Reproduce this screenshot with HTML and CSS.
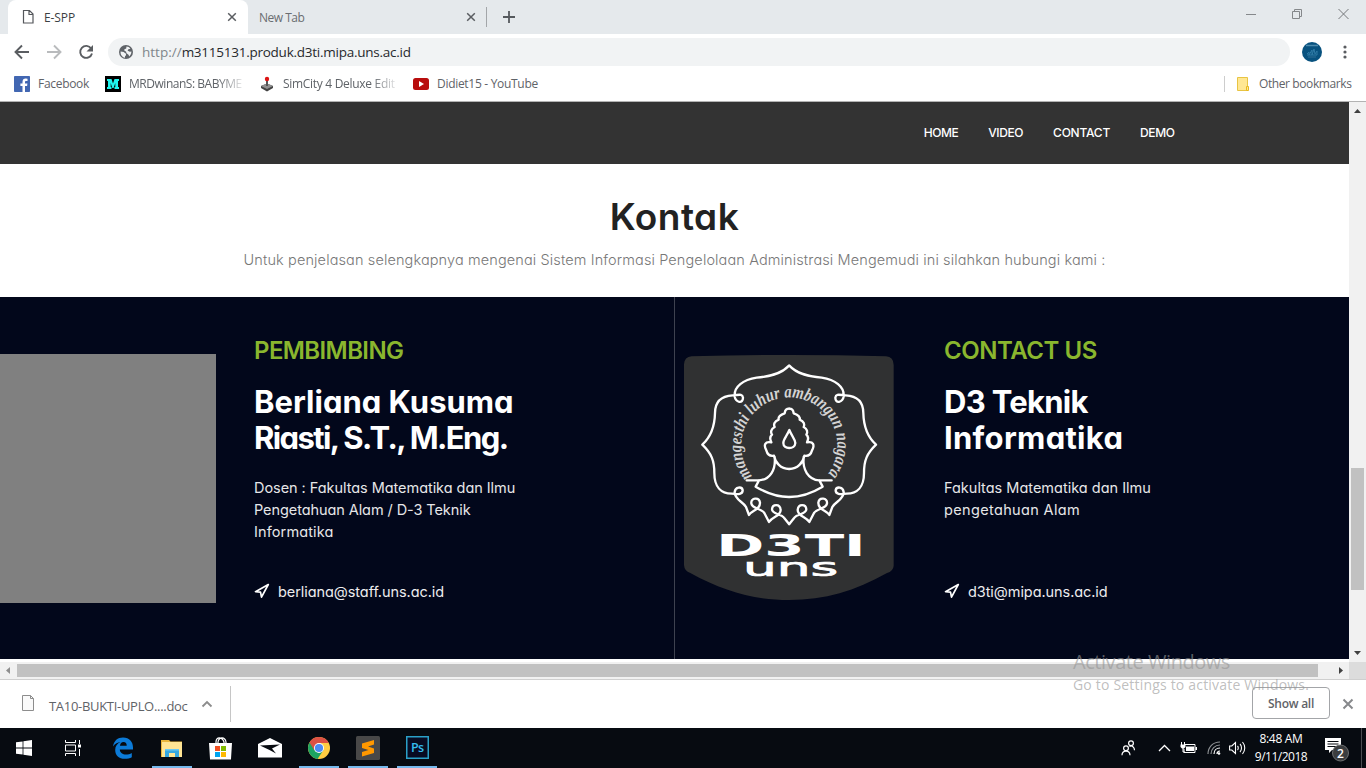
FILE: index.html
```html
<!DOCTYPE html>
<html lang="id">
<head>
<meta charset="utf-8">
<title>E-SPP</title>
<link rel="stylesheet" href="styles.css">
</head>
<body>
<div class="screen">
  <header class="tabs">
    <div class="tab tab-active">
      <svg class="tab-icon" width="12" height="16" viewBox="0 0 12 16"><path d="M1.5 1.5h6l3.500 3.500v9h-9.500z M7 1.500v4h4" fill="none" stroke="#54575b" stroke-width="1.200"/></svg>
      <span class="tab-title t-espp">E-SPP</span>
      <svg class="tab-close" width="10" height="10" viewBox="0 0 10 10"><path d="M1.200 1.200l7.600 7.600M8.800 1.200l-7.600 7.600" stroke="#5a5d61" stroke-width="1.500"/></svg>
    </div>
    <div class="tab tab-idle">
      <span class="tab-title t-newtab">New Tab</span>
      <svg class="tab-close" width="10" height="10" viewBox="0 0 10 10"><path d="M1.200 1.200l7.600 7.600M8.800 1.200l-7.600 7.600" stroke="#5a5d61" stroke-width="1.500"/></svg>
    </div>
    <svg class="tab-plus" width="12" height="12" viewBox="0 0 12 12"><path d="M6 0v12M0 6h12" stroke="#55595d" stroke-width="1.800"/></svg>
    <div class="window-controls">
      <svg width="11" height="12" viewBox="0 0 11 12"><path d="M0 6.500h10" stroke="#85888b"/></svg>
      <svg width="11" height="12" viewBox="0 0 11 12"><path d="M.5 3.500h7v7h-7zM2.500 3.500v-2h7v7h-2" fill="none" stroke="#85888b"/></svg>
      <svg width="11" height="12" viewBox="0 0 11 12"><path d="M.5 1l10 10M10.500 1l-10 10" stroke="#75787b"/></svg>
    </div>
  </header>
  <div class="toolbar">
    <svg class="tool-icon" width="16" height="16" viewBox="0 0 16 16"><path d="M15 8H2M8 1.500L1.500 8 8 14.500" fill="none" stroke="#5a5d61" stroke-width="1.900"/></svg>
    <svg class="tool-icon" width="16" height="16" viewBox="0 0 16 16"><path d="M1 8h13M8 1.500L14.500 8 8 14.500" fill="none" stroke="#b9bbbd" stroke-width="1.900"/></svg>
    <svg class="tool-icon" width="16" height="16" viewBox="0 0 16 16"><path d="M13.200 4.500A6 6 0 1 0 14 9.500" fill="none" stroke="#5a5d61" stroke-width="1.900"/><path d="M15 1v6.500H8.500z" fill="#5a5d61"/></svg>
    <div class="omnibox">
      <svg width="14" height="14" viewBox="0 0 14 14"><circle cx="7" cy="7" r="7" fill="#5f6368"/><path d="M1.600 6.500l3 .5 2.400 1.800v1.400l-1 1v1.500C3 12.300 1.300 9.500 1.600 6.500zM7.500 1.600c1.500 0 3 .9 3.900 2.100l-2 .5-.8 1.600 2.300 1 1.500-.2c0 2-.8 3.700-2.100 4.800l-.8-1.700-2-1.500-.5-1.700-1.500-.7-.3-1.400 2-1z" fill="#f1f3f4"/></svg>
      <span class="url"><span class="scheme">http://</span><span class="host">m3115131.produk.d3ti.mipa.uns.ac.id</span></span>
    </div>
    <svg class="avatar" width="20" height="20" viewBox="0 0 20 20"><circle cx="10" cy="10" r="10" fill="#08527f"/><path d="M4 3.500h12" stroke="#4d8bad" stroke-width="1.500"/><path d="M5 12l2-2v3l3-5v5l2-6 1 5 2-3v4H5" fill="none" stroke="#2f7aa5" stroke-width="1"/><path d="M6 15h8" stroke="#2f6f96"/></svg>
    <svg class="kebab" width="4" height="14" viewBox="0 0 4 14"><g fill="#5a5d61"><circle cx="2" cy="2" r="1.600"/><circle cx="2" cy="7" r="1.600"/><circle cx="2" cy="12" r="1.600"/></g></svg>
  </div>
  <div class="bookmarks">
    <div class="bm bm-fb"><svg width="16" height="16" viewBox="0 0 16 16"><rect width="16" height="16" rx=".8" fill="#4267b2"/><path d="M11 16V10h2.100l.3-2.400H11V6.200c0-.8.300-1.200 1.200-1.200h1.300V2.700l-1.800-.1C9.700 2.600 8.500 3.800 8.500 5.900v1.700H6.400V10h2.100v6z" fill="#fff"/></svg><span class="t-fb">Facebook</span></div>
    <div class="bm bm-mr"><svg width="16" height="16" viewBox="0 0 16 16"><path fill="#000" d="M0 0h16v16H0z"/><path d="M2 3h4.500L8 7.500 9.500 3H14v2h-1v6h1v2H9.500v-2h.8V7L8.600 12H7.300L5.700 7v4h.8v2H2v-2h1V5H2z" fill="#1ff5ee"/></svg><span class="t-mr fade">MRDwinanS: BABYME</span></div>
    <div class="bm bm-sim"><svg width="14" height="16" viewBox="0 0 14 16"><path d="M1 10l6-2.500L13 10v2l-6 3.500L1 12z" fill="#444"/><path d="M1 10l6-2.500L13 10l-6 3z" fill="#909090"/><path d="M7 4v6" stroke="#555" stroke-width="2"/><circle cx="7" cy="3" r="2.200" fill="#dc1414"/></svg><span class="t-sim fade">SimCity 4 Deluxe Edit</span></div>
    <div class="bm bm-yt"><svg width="16" height="12" viewBox="0 0 16 12"><rect width="16" height="12" rx="2.500" fill="#b80d0d"/><path d="M6 3l5 3-5 3z" fill="#fff"/></svg><span class="t-yt">Didiet15 - YouTube</span></div>
    <div class="bm bm-other"><svg width="12" height="14" viewBox="0 0 12 14"><path d="M.5.500h10v13H.5z" fill="#ffe793" stroke="#e8c443"/><path d="M9.500 9.500h2v4h-2z" fill="#ffe793" stroke="#e8b91f"/></svg><span class="t-other">Other bookmarks</span></div>
  </div>
  <div class="viewport">
    <main class="page">
      <nav class="nav"><a class="n-home">HOME</a><a class="n-video">VIDEO</a><a class="n-contact">CONTACT</a><a class="n-demo">DEMO</a></nav>
      <section class="intro">
        <h1>Kontak</h1>
        <p>Untuk penjelasan selengkapnya mengenai Sistem Informasi Pengelolaan Administrasi Mengemudi ini silahkan hubungi kami :</p>
      </section>
      <section class="contacts">
        <article class="card card-left">
          <div class="photo"></div>
          <div class="info">
            <h2 class="k-pem">PEMBIMBING</h2>
            <h3><span class="k-ber">Berliana Kusuma</span><br><span class="k-ria">Riasti, S.T., M.Eng.</span></h3>
            <p class="desc"><span class="k-dos">Dosen : Fakultas Matematika dan Ilmu</span><br><span class="k-pen">Pengetahuan Alam / D-3 Teknik</span><br><span class="k-inf">Informatika</span></p>
            <div class="mail"><svg width="16" height="16" viewBox="0 0 16 16"><path d="M14.300 1.500L1.500 8.700l5 .4 1 5z" fill="none" stroke="#fff" stroke-width="1.700" stroke-linejoin="round"/></svg><span class="k-m1">berliana@staff.uns.ac.id</span></div>
          </div>
        </article>
        <article class="card">
          <svg class="emblem" width="230" height="265" viewBox="0 0 690 795">
            <path d="M50 34Q345 26 633 34Q656 36 656 60V662Q655 678 636 684C540 738 450 765 342 765S145 738 46 684Q28 678 27 660V58Q28 36 50 34z" fill="#303132"/>
            <g fill="none" stroke="#fff" stroke-width="7" stroke-linejoin="round" stroke-linecap="round">
              <path id="half" d="M342 62C317 89 280 95 245 98C205 104 176 125 179 155C182 172 204 178 204 158C202 144 188 151 173 151C139 153 120 171 120 204C119 250 106 277 82 299C110 326 118 347 118 384C118 425 138 446 170 446C190 449 204 448 203 435C200 424 181 425 179 441C178 464 205 470 213 486L222 510C230 496 256 495 255 473C252 454 227 459 229 475C230 491 259 490 268 504L282 531C292 515 317 514 317 495C315 475 292 477 291 493C291 508 318 506 327 518L342 537"/>
              <use href="#half" transform="matrix(-1 0 0 1 685 0)"/>
              <path id="face" d="M342 191C330 191 330 199 329 205C314 210 309 216 311 224C298 229 295 239 299 246C288 252 286 262 291 269C283 276 285 284 289 292C270 288 265 300 274 316C278 331 287 334 297 332C301 353 317 372 342 372M299 336C303 373 286 404 252 406H215M252 406L242 425C277 446 307 456 342 456"/>
              <use href="#face" transform="matrix(-1 0 0 1 685 0)"/>
              <path d="M343 255C336 273 325 282 325 294C325 314 360 314 361 294C360 281 350 273 343 255z"/>
            </g>
            <path id="motto-arc" d="M232 393A144 144 0 1 1 454 393" fill="none"/>
            <text class="motto"><textPath href="#motto-arc" textLength="644" lengthAdjust="spacingAndGlyphs">mangesthi luhur ambangun nagara</textPath></text>
            <text class="logo-big" x="124" y="632" textLength="448" lengthAdjust="spacingAndGlyphs">D3TI</text>
            <text class="logo-small" x="204" y="694" textLength="286" lengthAdjust="spacingAndGlyphs">uns</text>
          </svg>
          <div class="info">
            <h2 class="k-con">CONTACT US</h2>
            <h3><span class="k-d3">D3 Teknik</span><br><span class="k-info">Informatika</span></h3>
            <p class="desc"><span class="k-fak">Fakultas Matematika dan Ilmu</span><br><span class="k-pal">pengetahuan Alam</span></p>
            <div class="mail"><svg width="16" height="16" viewBox="0 0 16 16"><path d="M14.300 1.500L1.500 8.700l5 .4 1 5z" fill="none" stroke="#fff" stroke-width="1.700" stroke-linejoin="round"/></svg><span class="k-m2">d3ti@mipa.uns.ac.id</span></div>
          </div>
        </article>
      </section>
    </main>
    <div class="vscroll">
      <svg width="17" height="17" viewBox="0 0 17 17"><path d="M5 11l3.500-4L12 11z" fill="#404040"/></svg>
      <div class="vthumb"></div>
      <svg width="17" height="17" viewBox="0 0 17 17"><path d="M5 6l3.500 4L12 6z" fill="#404040"/></svg>
    </div>
  </div>
  <div class="hscroll">
    <svg width="17" height="17" viewBox="0 0 17 17"><path d="M10 5L6 8.500 10 12z" fill="#8f8f8f"/></svg>
    <div class="hthumb"></div>
    <svg class="hright" width="17" height="17" viewBox="0 0 17 17"><path d="M7 5l4 3.500L7 12z" fill="#404040"/></svg>
    <div class="corner"></div>
  </div>
  <div class="downloads">
    <svg class="doc" width="12" height="16" viewBox="0 0 12 16"><path d="M.5.500h8l3 3v12H.5z" fill="#fafafa" stroke="#8d8d8d"/><path d="M8.500.500v3h3" fill="none" stroke="#8d8d8d"/></svg>
    <span class="t-doc">TA10-BUKTI-UPLO....doc</span>
    <svg class="chev" width="12" height="8" viewBox="0 0 12 8"><path d="M1.500 6.500L6 2l4.500 4.500" fill="none" stroke="#8c8c8c" stroke-width="1.800"/></svg>
    <div class="sep"></div>
    <div class="showall"><span class="t-show">Show all</span></div>
    <svg class="dl-close" width="12" height="12" viewBox="0 0 12 12"><path d="M1.500 1.500l9 9M10.500 1.500l-9 9" stroke="#87898c" stroke-width="2"/></svg>
  </div>
  <footer class="taskbar">
    <div class="app app-start"><svg width="16" height="16" viewBox="0 0 16 16"><path d="M0 2.300L6.600 1.400v6.200H0zM7.400 1.300L16 0v7.600H7.400zM0 8.400h6.600v6.200L0 13.700zM7.400 8.400H16V16l-8.600-1.300z" fill="#fff"/></svg></div>
    <div class="app app-view"><svg width="16" height="16" viewBox="0 0 16 16"><path d="M.5 0v2.500h10V0M.5 16v-2.500h10V16M.5 5h10v6H.5zM14.500 0v4M14.500 9v7" fill="none" stroke="#fff"/><path d="M13 4.500h3v3h-3z" fill="#fff"/></svg></div>
    <div class="app"><svg width="20" height="22" viewBox="0 0 20 22"><path d="M0 9.500C.8 3.800 4.700.5 10 .5c6.600 0 10 4.500 10 10v2H6.800c.2 3.500 3 5 6 5 2.400 0 4.200-.6 6-1.600v4.300c-1.900 1-4.300 1.600-7 1.600-5.800 0-9.600-3.600-9.600-8.900 0-3.400 1.900-6.300 5.400-7.800C4.700 5.600 2.100 6.600 0 9.500zM7 8.800h6.700c.1-2.400-1-3.800-3.200-3.800C8.500 5 7.200 6.500 7 8.800z" fill="#0c7bd8"/></svg></div>
    <div class="app open"><svg width="22" height="19" viewBox="0 0 22 19"><path d="M0 1h8l1.500 1.500H21V18H0z" fill="#e9b63c"/><path d="M1 3h20v15H1z" fill="#ffe594"/><path d="M4 10h14v8h-4v-4H8v4H4z" fill="#36a8e0"/><path d="M4 10h14v1.500H4z" fill="#6ccaf2"/></svg></div>
    <div class="app"><svg width="23" height="23" viewBox="0 0 23 23"><path d="M7 8V5c0-5.500 6-5.500 8 0v3M9 7V5c1-5.500 7-5.500 8 0v2" fill="none" stroke="#fff" stroke-width="1.200"/><path d="M0 6h23l-1 16.500H1z" fill="#fff"/><path d="M6 9h5v5H6z" fill="#f25022"/><path d="M12 9h5v5h-5z" fill="#7fba00"/><path d="M6 15h5v5H6z" fill="#00a4ef"/><path d="M12 15h5v5h-5z" fill="#ffb900"/></svg></div>
    <div class="app"><svg width="24" height="20" viewBox="0 0 24 20"><path d="M0 6l12-6 12 6v13.500H0z" fill="#fff"/><path d="M2 7.500L22 6.500 14 10.500 18 15.500 11.500 12z" fill="#080b10"/></svg></div>
    <div class="app open"><svg width="22" height="22" viewBox="0 0 22 22"><circle cx="11" cy="11" r="11" fill="#ffcd42"/><path d="M11 11L1.500 5.500A11 11 0 0 0 9.500 21.900L15.500 13z" fill="#1da462"/><path d="M1.500 5.500A11 11 0 0 1 20.700 6H11L6.500 13.500z" fill="#dd5144"/><circle cx="11" cy="11" r="5" fill="#fff"/><circle cx="11" cy="11" r="4.100" fill="#4c8bf5"/></svg></div>
    <div class="app open"><svg width="24" height="24" viewBox="0 0 24 24"><rect width="24" height="24" rx="1.500" fill="#484848"/><path d="M18 4v4.500l-6 1.900 6 2v4.600L6 20.500V16l6.500-2L6 12V7.500z" fill="#ff9800"/></svg></div>
    <div class="app open app-ps"><svg width="23" height="23" viewBox="0 0 23 23"><rect x=".75" y=".75" width="21.500" height="21.500" fill="#080b22" stroke="#2aa0c8" stroke-width="1.500"/><text class="ps" x="5" y="15.500" textLength="13">Ps</text></svg></div>
    <div class="tray">
      <svg class="i-people" width="14" height="16" viewBox="0 0 14 16"><g fill="none" stroke="#fff" stroke-width="1.200"><circle cx="5" cy="8.300" r="2.400"/><path d="M1 15.300c0-5.600 8-5.600 8 0"/><circle cx="10" cy="3.300" r="2.400"/><path d="M8.500 6.500c2.500-1.500 5 .7 5 3.700"/></g></svg>
      <svg class="i-up" width="13" height="8" viewBox="0 0 13 8"><path d="M1 7l5.500-5.500L12 7" fill="none" stroke="#fff" stroke-width="1.300"/></svg>
      <svg class="i-bat" width="17" height="12" viewBox="0 0 17 12"><path d="M5 2.500h10v8H4V7" fill="none" stroke="#fff"/><path d="M6 4.500h8v4.500H6zM15.500 5H17v3h-1.500zM.5 2.500h5v2.500L4 6.500H2L.5 5z" fill="#fff"/><path d="M1.500 0v3M4.500 0v3M3 6v4h2" fill="none" stroke="#fff"/></svg>
      <svg class="i-wifi" width="14" height="14" viewBox="0 0 14 14"><g fill="none" stroke="#8e9194" stroke-width="1.200"><path d="M1 13C1 6 6 1 13 1M4 13c0-5 4-9 9-9"/><path d="M7 13c0-3.500 2.500-6 6-6M10 13c0-1.800 1.200-3 3-3" stroke="#fff"/></g><circle cx="12" cy="12.500" r="1.300" fill="#fff"/></svg>
      <svg class="i-vol" width="17" height="14" viewBox="0 0 17 14"><g fill="none" stroke="#fff" stroke-width="1.100"><path d="M.6 5h2.200L6.500 1.500v11L2.800 9H.6z"/><path d="M8.500 5c1 1 1 3 0 4M11 3c2 2 2 6 0 8M13.500 1c3 3.500 3 8.500 0 12"/></g></svg>
      <div class="clock"><span class="t-time">8:48 AM</span><span class="t-date">9/11/2018</span></div>
      <svg class="i-note" width="25" height="25" viewBox="0 0 25 25"><path d="M0 0h16v12H7l-3 3v-3H0z" fill="#fff"/><path d="M2.500 3.500h11M2.500 6h11M2.500 8.500h11" stroke="#090c12"/><circle cx="15.500" cy="15" r="8" fill="#3b3d3f" stroke="#6c6e70"/><text class="badge" x="12.100" y="19.500">2</text></svg>
      <div class="peek"></div>
    </div>
  </footer>
  <div class="watermark"><span class="w1">Activate Windows</span><span class="w2">Go to Settings to activate Windows.</span></div>
</div>
</body>
</html>
```
FILE: styles.css
```css
* { box-sizing: border-box; }
body { margin: 0; font-family: "Open Sans", sans-serif; font-size: 12px; }
svg { display: block; flex: none; overflow: visible; }
span { white-space: nowrap; }
.screen { position: relative; width: 1366px; height: 768px; overflow: hidden; display: flex; flex-direction: column; background: #fff; }

/* Browser chrome */
.tabs { height: 34px; background: #e5e9ec; display: flex; align-items: stretch; }
.tab { display: flex; align-items: center; }
.tab-active { width: 240px; margin-left: 8px; background: #fff; border-radius: 8px 8px 0 0; padding: 0 11px 0 14px; color: #3c4043; }
.tab-idle { width: 239px; padding: 0 11px; position: relative; color: #6a6d71; }
.tab-idle::after { content: ""; position: absolute; right: 0; top: 7px; width: 1px; height: 20px; background: #a3a6a9; }
.tab-title { margin-left: 10px; }
.tab-idle .tab-title { margin-left: 0; }
.t-espp { letter-spacing: -.1px; }
.t-newtab { letter-spacing: -.5px; }
.tab-close { margin-left: auto; }
.tab-plus { margin: 11px 0 0 16px; }
.window-controls { margin-left: auto; display: flex; gap: 35px; padding: 8px 17px 0 0; }

.toolbar { height: 35px; display: flex; align-items: center; padding-left: 14px; }
.tool-icon { margin-right: 16px; }
.omnibox { height: 28px; width: 1182px; margin-left: -2px; border-radius: 14px; background: #f1f3f4; display: flex; align-items: center; padding-left: 11px; gap: 9px; font-size: 13.500px; color: #27292c; }
.scheme { color: #80868b; }
.host { letter-spacing: -.25px; }
.avatar { margin-left: 12px; }
.kebab { margin-left: 21px; }

.bookmarks { height: 33px; display: flex; align-items: center; padding-left: 14px; border-bottom: 1px solid #b3b3b3; color: #5f6368; padding-bottom: 3px; letter-spacing: -.3px; }
.bm { display: flex; align-items: center; gap: 8px; }
.bm-fb { width: 91px; }
.bm-mr { width: 155px; }
.bm-sim { width: 153px; gap: 9px; }
.bm-yt { gap: 8px; }
.t-mr { letter-spacing: -.47px; }
.bm-other { margin-left: auto; width: 142px; height: 16px; border-left: 1px solid #cdcdcd; padding-left: 12px; gap: 10px; letter-spacing: -.4px; }
.fade { width: 113px; -webkit-mask-image: linear-gradient(90deg, #000 78%, rgba(0,0,0,.15)); mask-image: linear-gradient(90deg, #000 78%, rgba(0,0,0,.15)); }

/* Web page */
.viewport { height: 560px; display: flex; }
.page { width: 1349px; font-family: Inter, sans-serif; font-feature-settings: "cv11"; }
.nav { height: 62px; background: #333; display: flex; justify-content: flex-end; align-items: center; gap: 30px; padding: 0 174.500px 2px 0; color: #fff; font-size: 12px; font-weight: 500; }
.n-home { letter-spacing: -.45px; }
.n-video { letter-spacing: -.4px; }
.n-contact { letter-spacing: -.23px; }
.n-demo { letter-spacing: -.4px; }
.intro { height: 133px; text-align: center; padding-top: 31px; }
h1, h2, h3, p { margin: 0; }
h1 { font-size: 37px; line-height: 44px; font-weight: 600; color: #222; letter-spacing: .5px; }
.intro p { margin-top: 10px; font-size: 14.500px; line-height: 22px; font-weight: 300; color: #777; white-space: nowrap; letter-spacing: .12px; }
.contacts { height: 362px; background: #02071b; display: flex; color: #fff; }
.card { width: 674px; display: flex; gap: 39px; }
.card-left { width: 675px; border-right: 1px solid #3e4250; gap: 38.500px; }
.photo { width: 215.500px; height: 249px; margin-top: 57px; background: #808080; }
.emblem { margin-top: 48px; }
.info { padding-top: 39px; }
h2 { font-size: 24px; line-height: 30px; font-weight: 600; color: #8ab62e; letter-spacing: -.45px; }
.k-pem { letter-spacing: -.6px; }
h3 { margin-top: 18px; font-size: 31px; line-height: 36px; font-weight: 700; }
.k-ria { letter-spacing: -1.620px; word-spacing: 0; }
.k-d3 { letter-spacing: -.7px; }
.k-info { letter-spacing: .3px; }
.desc { margin-top: 21px; height: 66px; font-size: 14.500px; line-height: 22px; color: #e6e6e8; }
.k-dos { letter-spacing: -.05px; }
.k-pen { letter-spacing: -.08px; }
.k-inf { letter-spacing: .12px; }
.k-pal { letter-spacing: .35px; }
.mail { margin-top: 37px; height: 22px; display: flex; align-items: center; gap: 8px; font-size: 14.500px; color: #ececee; letter-spacing: -.07px; }
.motto { font: italic 600 54px "Liberation Serif", serif; fill: #d4d4d4; }
.logo-big { font: 700 90px "DejaVu Sans", sans-serif; fill: #fff; }
.logo-small { font: 400 73px "DejaVu Sans", sans-serif; fill: #fff; stroke: #fff; stroke-width: 2px; }

.vscroll { width: 17px; background: #f1f1f1; display: flex; flex-direction: column; }
.vthumb { width: 13px; height: 122px; margin: 349px 2px auto; background: #c1c1c1; }
.hscroll { height: 18px; background: #f1f1f1; border-bottom: 1px solid #cfcfcf; display: flex; }
.hthumb { width: 1301px; height: 13px; margin-top: 2px; background: #c1c1c1; }
.hright { margin-left: 14px; }
.corner { width: 17px; background: #dcdcdc; }

/* Download shelf */
.downloads { height: 48px; display: flex; align-items: center; padding-left: 22px; color: #5f6368; font-size: 13px; }
.doc { margin: 0 15px 2px 0; }
.t-doc { margin-top: 4px; letter-spacing: -.3px; }
.chev { margin-left: 13px; }
.sep { width: 1px; height: 36px; background: #c6c6c6; margin-left: 17px; }
.showall { width: 78px; height: 32px; margin: -2px 0 0 auto; border: 1px solid #a3a5a8; border-radius: 4px; display: flex; align-items: center; justify-content: center; font-size: 12px; font-weight: 600; letter-spacing: -.25px; }
.dl-close { margin: 0 12px 0 12px; }

/* Desktop taskbar */
.taskbar { height: 40px; background: #070b11; display: flex; }
.app { width: 49px; display: flex; align-items: center; justify-content: center; position: relative; }
.app-start { width: 48px; }
.app-view { width: 50px; }
.app-ps { padding: 0 0 2px 1px; }
.open::after { content: ""; position: absolute; left: 5px; bottom: 0; width: 40px; height: 2px; background: #76b9ed; }
.ps { font: 600 12.500px "Open Sans", sans-serif; fill: #35bdf0; }
.tray { margin-left: auto; display: flex; align-items: center; color: #fff; }
.i-up { margin-left: 23px; }
.i-bat { margin-left: 9px; }
.i-wifi { margin-left: 10px; }
.i-vol { margin-left: 8px; }
.clock { width: 70px; display: flex; flex-direction: column; align-items: center; line-height: 18px; }
.t-time { letter-spacing: -.3px; }
.t-date { letter-spacing: -.5px; }
.i-note { margin: 5px 0 0 9px; }
.badge { font: 600 12px "Open Sans", sans-serif; fill: #fff; }
.peek { width: 1px; height: 40px; background: #4a4d51; margin: 0 4px 0 11px; }
.watermark { position: absolute; left: 1073px; top: 649px; display: flex; flex-direction: column; color: rgba(150,150,150,.62); }
.w1 { font-size: 20px; line-height: 26px; letter-spacing: -.45px; }
.w2 { font-size: 14px; line-height: 20px; letter-spacing: .19px; }
```
